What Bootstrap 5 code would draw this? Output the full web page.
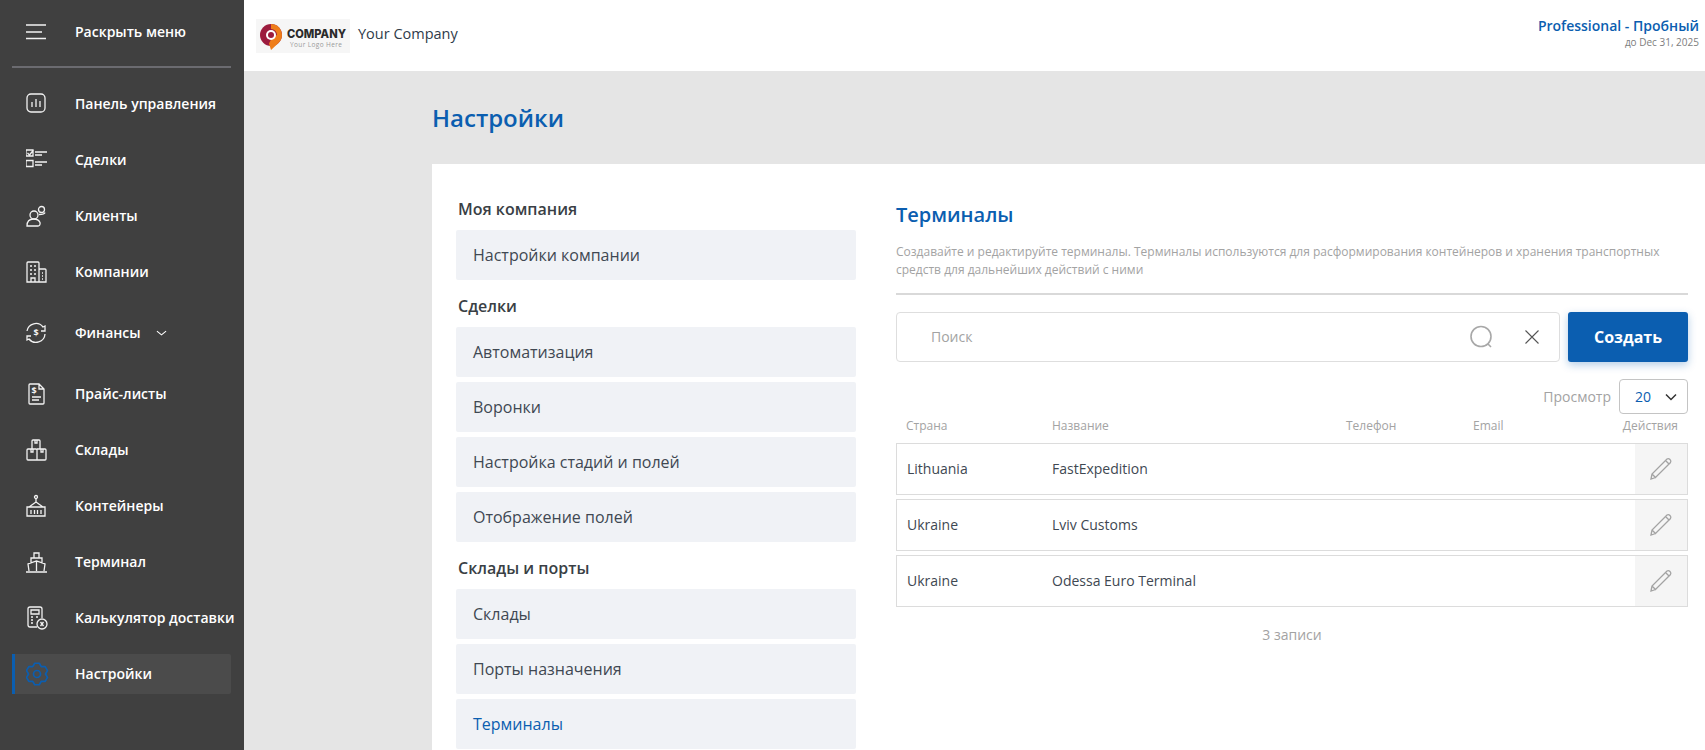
<!DOCTYPE html>
<html lang="ru">
<head>
<meta charset="utf-8">
<title>Настройки</title>
<link href="https://cdn.jsdelivr.net/npm/bootstrap@5.3.0/dist/css/bootstrap.min.css" rel="stylesheet">
<style>
html,body{height:750px;overflow:hidden}
body{font-family:"Open Sans","Noto Sans",sans-serif;background:#e5e5e5;color:#404040;font-size:14px}
.app-shell{height:750px}
.side{width:244px;flex:0 0 244px;background:#404040;color:#fff;padding:0 13px 0 12px}
.side-rule{height:2px;background:#6b6b70;margin:2px 0 8px}
.side-item{height:56px;padding-left:14px;font-weight:600;font-size:14px;white-space:nowrap;color:#fff}
.side-item>span{padding-bottom:2px}
.side-item.side-top{height:64px}
.side-item.tall{height:66px}
.side-item svg.ico{width:24px;height:24px;flex:0 0 24px;margin-right:25px;fill:none;stroke:#f2f2f2;stroke-width:1.3}
.side-item .chev{margin-left:15px;width:11px;height:8px;fill:none;stroke:#fff;stroke-width:1.2}
.side-on{position:relative}
.side-on::before{content:"";position:absolute;left:0;right:0;top:8px;bottom:8px;background:#4b4b4b;border-left:3px solid #0b5eb0;border-radius:0 2px 2px 0}
.side-on>*{position:relative}
.side-item.side-on svg.ico{stroke:#0b5eb0;stroke-width:1.7;stroke-linejoin:round}
.right-pane{min-width:0}
.topbar{height:71px;background:#fff;padding:0 6px 0 12px}
.logo-box{width:94px;height:34px;background:#f6f6f6;margin-right:8px}
.co-name{font-size:14.5px;color:#2f3b4a;padding-bottom:3px}
.plan-wrap{padding-bottom:6px}
.plan{font-size:14px;font-weight:600;color:#0b5eb0;line-height:18px}
.plan-date{font-size:10px;color:#7d7d7d;line-height:13px;margin-top:1px}
.band{height:93px;padding-left:188px;padding-top:2px}
.band h1{font-size:24px;font-weight:600;color:#0b5eb0;margin:0}
.page-body{margin-left:188px;background:#fff;height:586px;padding-left:24px;padding-right:17px}
.menu-col{width:400px;flex:0 0 400px;margin-right:40px;padding-top:35px}
.menu-head{font-size:16px;font-weight:600;color:#3a3f45;line-height:20px;margin:0 0 11px;padding-left:2px}
.menu-block+.menu-block{margin-top:16px}
.menu-link{display:flex;align-items:center;height:50px;background:#f0f2f6;border-radius:2px;padding-left:17px;font-size:16px;color:#404852;text-decoration:none;margin-bottom:5px}
.menu-link.cur{color:#0b5eb0}
.main-col{flex:1 1 auto;min-width:0;padding-top:37px}
.main-col h2{font-size:20px;font-weight:600;color:#0b5eb0;line-height:27px;margin:0 0 15px}
.intro{font-size:12px;line-height:18px;color:#a3a3a3;margin:0 0 14px;padding-right:20px}
.rule{height:2px;background:#d9d9d9;margin-bottom:17px}
.search-box{height:50px;border:1px solid #dedede;border-radius:4px;padding:0 20px 0 34px;font-size:14px;color:#a3a3a3;margin-right:8px}
.search-word{padding-bottom:2px}
.x-ico{margin-left:32px}
.make-btn{width:120px;height:50px;background:#0b5eb0;border:0;border-radius:3px;color:#fff;font-weight:700;font-size:16px;box-shadow:0 3px 8px rgba(11,94,176,.3)}
.view-row{margin-top:17px;height:35px;color:#a3a3a3;font-size:14px}
.view-sel{width:69px;height:35px;border:1px solid #c4c4c4;border-radius:4px;margin-left:8px;padding:0 10px 0 15px;color:#0b5eb0;font-size:14px}
.tbl-grid{display:grid;grid-template-columns:155px 293px 127px 1fr 52px}
.tbl-head{grid-template-columns:155px 294px 127px 1fr 52px;height:29px;align-items:end;font-size:12px;color:#a3a3a3;padding-bottom:8px;padding-left:1px}
.tbl-head>div:first-child{padding-left:9px}
.tbl-head>div:last-child{display:flex;justify-content:flex-end;padding-right:10px;white-space:nowrap}
.tbl-row{height:52px;border:1px solid #dcdcdc;margin-bottom:4px;align-items:center;font-size:14px;color:#404852}
.tbl-row>div{padding-bottom:2px}
.tbl-row>div:first-child{padding-left:10px}
.tbl-row>.pen-cell{height:100%;background:#f5f5f5;grid-column:5;padding-bottom:0}
.pen-cell svg{width:24px;height:24px;fill:none;stroke:#a3a3a3;stroke-width:1.3}
.rec-count{color:#a3a3a3;font-size:14px;margin-top:17px}
</style>
</head>
<body>
<div class="app-shell d-flex">
  <aside class="side">
    <div class="side-item side-top d-flex align-items-center">
      <svg class="ico" viewBox="0 0 24 24"><path d="M0 5h20M0 12h16M0 18.500h20"/></svg><span>Раскрыть меню</span>
    </div>
    <div class="side-rule"></div>
    <a class="side-item d-flex align-items-center text-decoration-none"><svg class="ico" viewBox="0 0 24 24"><rect x="1" y="2" width="18" height="18" rx="4"/><path d="M6 10v5M10 7v8M14 9v6"/></svg><span>Панель управления</span></a>
    <a class="side-item d-flex align-items-center text-decoration-none"><svg class="ico" viewBox="0 0 24 24"><path d="M0 2h7v6H0zM0 12.500h7v6H0zM1.500 5l2 2 4-5M9 4h12M9 7h7M9 14h12M9 17h7"/></svg><span>Сделки</span></a>
    <a class="side-item d-flex align-items-center text-decoration-none"><svg class="ico" viewBox="0 0 24 24"><circle cx="8" cy="11" r="4"/><circle cx="15.500" cy="5.500" r="3"/><path d="M1 22c0-6 3-7 6.500-7s5.500 1 6.500 3.500c.5 2-.5 3.500-2 3.500zM13 10.500c3 0 5.500 0 6-2"/></svg><span>Клиенты</span></a>
    <a class="side-item d-flex align-items-center text-decoration-none"><svg class="ico" viewBox="0 0 24 24"><path d="M1 22V3q0-1 1-1h10q1 0 1 1v19zM13 9h6q1 0 1 1v12h-7M4 6h2M8 6h2M4 10h2M8 10h2M4 14h2M8 14h2M5 22v-4h4v4M16 13h1M16 16h1M16 19h1"/></svg><span>Компании</span></a>
    <a class="side-item tall d-flex align-items-center text-decoration-none"><svg class="ico" viewBox="0 0 24 24"><path d="M1 10a9 9 0 0 1 16-4l2-1v5h-4M19 13a9 9 0 0 1-16 5l-2 1v-4h4"/><text x="10" y="15" font-size="9" font-weight="700" text-anchor="middle" fill="#f2f2f2" stroke="none">$</text></svg><span>Финансы</span><svg class="chev" viewBox="0 0 12 8"><path d="M1 2l5 4 5-4"/></svg></a>
    <a class="side-item d-flex align-items-center text-decoration-none"><svg class="ico" viewBox="0 0 24 24"><path d="M4 2h9l5 5v14q0 1-1 1H4q-1 0-1-1V3q0-1 1-1zM13 2v5h5M6 15h9M6 18h7"/><text x="8" y="12" font-size="9" font-weight="700" text-anchor="middle" fill="#f2f2f2" stroke="none">$</text></svg><span>Прайс-листы</span></a>
    <a class="side-item d-flex align-items-center text-decoration-none"><svg class="ico" viewBox="0 0 24 24"><path d="M6 11V3q0-1 1-1h6q1 0 1 1v8M9 2v3h2V2M1 12q0-1 1-1h8q1 0 1 1v10H2q-1 0-1-1zM11 11h8q1 0 1 1v9q0 1-1 1h-8M5 11v3h2v-3M15 11v3h2v-3"/></svg><span>Склады</span></a>
    <a class="side-item d-flex align-items-center text-decoration-none"><svg class="ico" viewBox="0 0 24 24"><circle cx="10" cy="3" r="1.500"/><path d="M10 5v3M10 8l-7 5M10 8l7 5M1 13h18v9H1zM5 16v4M8.500 16v4M11.500 16v4M15 16v4"/></svg><span>Контейнеры</span></a>
    <a class="side-item d-flex align-items-center text-decoration-none"><svg class="ico" viewBox="0 0 24 24"><path d="M0 22h21M3 21l-1-7 8.500-3 8.500 3-1 7M5 13V8h11v5M8 8V3h5v5M10.500 11v10"/></svg><span>Терминал</span></a>
    <a class="side-item d-flex align-items-center text-decoration-none"><svg class="ico" viewBox="0 0 24 24"><path d="M11 21H4q-2 0-2-2V3q0-2 2-2h10q2 0 2 2v9M5 4h8v4H5zM5 11h2M5 14h2M5 17h2M10 11h2"/><circle cx="16" cy="18" r="5"/><path d="M14.500 16l3 4M17.500 16l-3 4"/></svg><span>Калькулятор доставки</span></a>
    <a class="side-item side-on d-flex align-items-center text-decoration-none"><svg class="ico" viewBox="0 0 24 24"><path transform="translate(11 12)" d="M-2.290-10.760L2.290-10.760 4.250-7.360 8.170-7.360 10.460-3.400 8.500 0 10.460 3.400 8.170 7.360 4.250 7.360 2.290 10.760-2.290 10.760-4.250 7.360-8.170 7.360-10.460 3.400-8.500 0-10.460-3.400-8.170-7.360-4.250-7.360z"/><circle cx="11" cy="12" r="3.500"/></svg><span>Настройки</span></a>
  </aside>
  <div class="right-pane flex-grow-1 d-flex flex-column">
    <header class="topbar d-flex align-items-center justify-content-between">
      <div class="d-flex align-items-center">
        <div class="logo-box d-flex align-items-center">
          <svg width="94" height="34" viewBox="0 0 94 34">
            <circle cx="15" cy="16" r="11" fill="#9c1c3e"/>
            <path d="M15 5a11 11 0 0 1 7.500 19L15 31l-2-6.500 3-6 5-2.500a6 6 0 0 0-6-6z" fill="#ee7d1a"/>
            <circle cx="15" cy="16" r="5" fill="#fff"/><circle cx="15" cy="16" r="3" fill="#9c1c3e"/>
            <text x="31" y="19" font-family="Inter,'Open Sans',sans-serif" font-size="12" font-weight="800" fill="#2b2b2b" textLength="59" lengthAdjust="spacingAndGlyphs">COMPANY</text>
            <text x="34" y="28" font-family="'Open Sans',sans-serif" font-size="6.500" fill="#9a9a9a" textLength="52">Your Logo Here</text>
          </svg>
        </div>
        <span class="co-name">Your Company</span>
      </div>
      <div class="plan-wrap text-end">
        <div class="plan">Professional - Пробный</div>
        <div class="plan-date">до Dec 31, 2025</div>
      </div>
    </header>
    <div class="band d-flex align-items-center"><h1>Настройки</h1></div>
    <div class="page-body d-flex">
      <nav class="menu-col">
        <div class="menu-block">
          <p class="menu-head">Моя компания</p>
          <a class="menu-link">Настройки компании</a>
        </div>
        <div class="menu-block">
          <p class="menu-head">Сделки</p>
          <a class="menu-link">Автоматизация</a>
          <a class="menu-link">Воронки</a>
          <a class="menu-link">Настройка стадий и полей</a>
          <a class="menu-link">Отображение полей</a>
        </div>
        <div class="menu-block">
          <p class="menu-head">Склады и порты</p>
          <a class="menu-link">Склады</a>
          <a class="menu-link">Порты назначения</a>
          <a class="menu-link cur">Терминалы</a>
        </div>
      </nav>
      <main class="main-col">
        <h2>Терминалы</h2>
        <p class="intro">Создавайте и редактируйте терминалы. Терминалы используются для расформирования контейнеров и хранения транспортных средств для дальнейших действий с ними</p>
        <div class="rule"></div>
        <div class="d-flex">
          <div class="search-box flex-grow-1 d-flex align-items-center">
            <span class="search-word flex-grow-1">Поиск</span>
            <svg width="24" height="24" viewBox="0 0 24 24" fill="none" stroke="#a8a8a8" stroke-width="1.600"><circle cx="12" cy="11.500" r="10"/><path d="M19 19l3 3"/></svg>
            <svg class="x-ico" width="14" height="14" viewBox="0 0 14 14" fill="none" stroke="#555" stroke-width="1.100"><path d="M.5.500l13 13M13.500.500l-13 13"/></svg>
          </div>
          <button class="make-btn" type="button">Создать</button>
        </div>
        <div class="view-row d-flex justify-content-end align-items-center">
          <span>Просмотр</span>
          <div class="view-sel d-flex align-items-center justify-content-between">
            <span>20</span>
            <svg width="12" height="8" viewBox="0 0 12 8" fill="none" stroke="#333" stroke-width="1.500"><path d="M1 1.500l5 5 5-5"/></svg>
          </div>
        </div>
        <div class="tbl-grid tbl-head"><div>Страна</div><div>Название</div><div>Телефон</div><div>Email</div><div>Действия</div></div>
        <div class="tbl-grid tbl-row"><div>Lithuania</div><div>FastExpedition</div><div></div><div></div>
          <div class="pen-cell d-flex align-items-center justify-content-center"><svg viewBox="0 0 24 24"><path d="M2 22l1-5L18 2q1.500-1 3 .5t.5 3L6.500 20.500zM3 17l4 4M16.500 3.500l4 4"/></svg></div></div>
        <div class="tbl-grid tbl-row"><div>Ukraine</div><div>Lviv Customs</div><div></div><div></div>
          <div class="pen-cell d-flex align-items-center justify-content-center"><svg viewBox="0 0 24 24"><path d="M2 22l1-5L18 2q1.500-1 3 .5t.5 3L6.500 20.500zM3 17l4 4M16.500 3.500l4 4"/></svg></div></div>
        <div class="tbl-grid tbl-row"><div>Ukraine</div><div>Odessa Euro Terminal</div><div></div><div></div>
          <div class="pen-cell d-flex align-items-center justify-content-center"><svg viewBox="0 0 24 24"><path d="M2 22l1-5L18 2q1.500-1 3 .5t.5 3L6.500 20.500zM3 17l4 4M16.500 3.500l4 4"/></svg></div></div>
        <div class="rec-count text-center">3 записи</div>
      </main>
    </div>
  </div>
</div>
</body>
</html>
